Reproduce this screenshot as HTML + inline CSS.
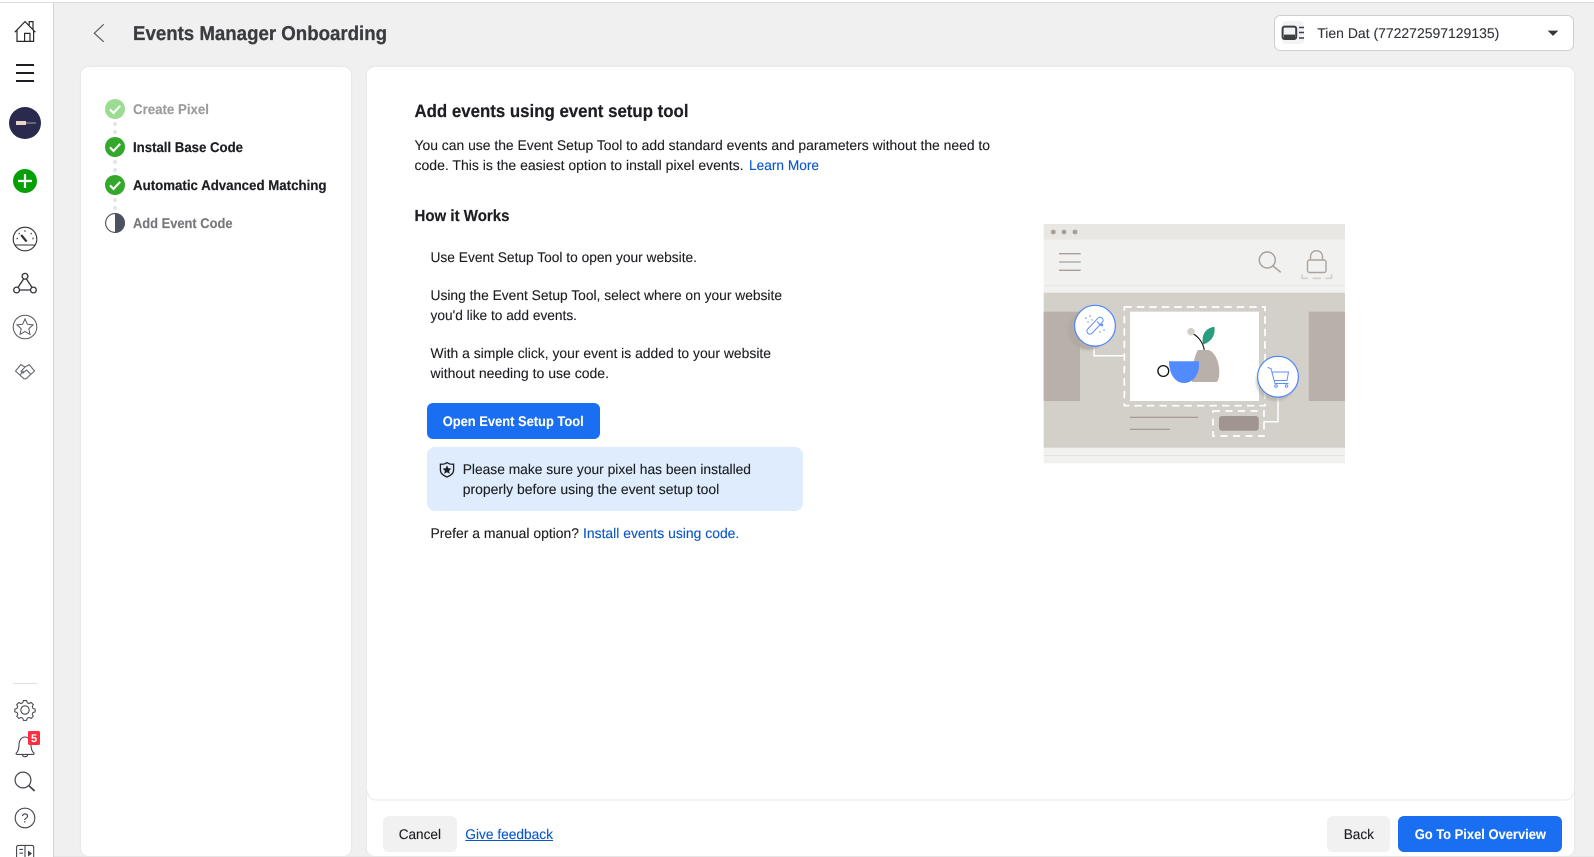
<!DOCTYPE html>
<html lang="en">
<head>
<meta charset="utf-8">
<title>Events Manager Onboarding</title>
<style>
html,body{margin:0;padding:0;width:1594px;height:857px;overflow:hidden;background:#f0f0f0}
svg{display:block;position:absolute;left:0;top:0;filter:blur(.35px)}
text{font-family:"Liberation Sans",Arial,sans-serif;text-rendering:geometricPrecision}
.b{font-weight:700}
.t{font-size:14px;fill:#1c1e21;stroke:#1c1e21;stroke-width:.12}
.l{font-size:14px;fill:#0b57c9;stroke:#0b57c9;stroke-width:.12}
.w{font-size:14px;font-weight:700;fill:#fff;stroke:#fff;stroke-width:.1}
.d{fill:#1c1e21;stroke:#1c1e21;stroke-width:.2}
</style>
</head>
<body>
<svg width="1594" height="857" viewBox="0 0 1594 857" xmlns="http://www.w3.org/2000/svg">
<defs>
<filter id="sh" x="-5%" y="-5%" width="110%" height="110%"><feDropShadow dx="0" dy="0" stdDeviation="1.2" flood-color="#000" flood-opacity=".07"/></filter>
<filter id="soft" x="-20%" y="-20%" width="140%" height="140%"><feGaussianBlur stdDeviation="1"/></filter>
</defs>
<rect width="1594" height="857" fill="#f0f0f0"/>
<rect width="1594" height="2" fill="#fff"/>
<rect y="2" width="1594" height="1" fill="#dcdcdc"/>
<rect y="3" width="53" height="854" fill="#fff"/>
<rect x="53" y="3" width="1" height="854" fill="#cfd2d6"/>

<!-- sidebar icons -->
<g fill="none" stroke="#26282b" stroke-width="1.2">
<path d="M14.8 32.2L25 21.6 35.4 32.2M17 30V41.4H33.6V30M24.6 41.4V33.4H30V41.4M29.2 25.2V21.6H33V29.4"/>
<path d="M16 65H34M16 73H34M16 81H34" stroke-width="1.9" stroke="#1c1e21"/>
</g>
<circle cx="25" cy="123" r="16" fill="#2a2a4e"/>
<rect x="16" y="121" width="10" height="4" fill="#e6d8c3"/>
<rect x="26" y="122.4" width="10" height="1.2" fill="#8f8f9e"/>
<circle cx="25" cy="181" r="12" fill="#05a005"/>
<path d="M25 174V188M18 181H32" stroke="#fff" stroke-width="2.2"/>
<g fill="none" stroke="#2f3236" stroke-width="1.1">
<circle cx="25" cy="239" r="11.8"/>
<path d="M14.5 245H35.5"/>
<path d="M21.2 235L26.6 241.6" stroke-width="2.2"/>
<path d="M16.6 238.5h1.2M18.6 233.6h1.2M24.4 231h1.2M30.6 233.6h1.2M32.4 238.5h1.2" stroke-width="1.4"/>
<circle cx="25" cy="276.3" r="2.9" stroke-width="1.3"/>
<circle cx="16.6" cy="290" r="2.9" stroke-width="1.3"/>
<circle cx="33.4" cy="290" r="2.9" stroke-width="1.3"/>
<path d="M23.6 279L18 287.4M26.4 279L32 287.4M19.5 290H30.5" stroke-width="1.3"/>
<circle cx="25" cy="327" r="11.8" stroke="#55585d" stroke-width="1"/>
<path d="M25 319L27.4 324.2 33 324.9 28.8 328.7 30 334.4 25 331.5 20 334.4 21.2 328.7 17 324.9 22.6 324.2Z" stroke="#55585d" stroke-width="1"/>
<path d="M15.5 371L20.8 364.6 25 367 29.2 364.6 34.5 371 26 378.8 24 378.8ZM25 367L21 371.5 23 373 26.5 370 31 374.5M20 375L23.5 371" stroke="#66696e"/>
</g>
<rect x="13" y="683" width="24" height="1" fill="#dadde1"/>
<g fill="none" stroke="#44474c" stroke-width="1.1">
<circle cx="25" cy="710" r="4.2"/>
<path d="M23 700.4h4l.8 2.7 2.3 1 2.6-1.3 2.7 2.7-1.3 2.6 1 2.2 2.6.8v3.4l-2.7.8-1 2.3 1.3 2.5-2.7 2.7-2.5-1.3-2.3 1-.8 2.7h-4l-.8-2.7-2.3-1-2.5 1.3-2.7-2.7 1.3-2.5-1-2.3-2.7-.8v-3.4l2.6-.8 1-2.2-1.3-2.6 2.7-2.7 2.6 1.3 2.3-1z" transform="translate(25 710) scale(.8) translate(-25 -712.2)" stroke-width="1.3"/>
<path d="M16.2 753.2C18.6 751 19 748 19 745C19 740.4 21.5 737 25 737C28.5 737 31 740.4 31 745C31 748 31.6 751 34 753.2C34.4 753.9 34 754.4 33.2 754.4H17C16.2 754.4 15.8 753.9 16.2 753.2ZM22.4 754.6C22.6 757.4 27.4 757.4 27.6 754.6"/>
<circle cx="23" cy="780" r="7.9" stroke-width="1.2"/>
<path d="M28.8 785.6L34.6 791" stroke-width="1.8"/>
<circle cx="25" cy="818" r="9.8"/>
<path d="M16.6 857V847.4C16.6 846 17.4 845.4 18.6 845.4H31.6C32.9 845.4 33.7 846 33.7 847.4V857M25 845.4V857M19.4 849.4H23M19.4 853.2H23"/>
</g>
<path d="M28 850.5L32 853.5 28 856.5Z" fill="#3d4045"/>
<text x="25" y="822.6" font-size="13" fill="#3d4045" text-anchor="middle">?</text>
<rect x="28" y="731" width="12" height="14" rx="1.5" fill="#fa2f42"/>
<text x="34" y="742" font-size="11" class="b" fill="#fff" text-anchor="middle">5</text>

<!-- header -->
<path d="M103.7 24.3L94.3 33.2 103.7 41.8" fill="none" stroke="#5a5d61" stroke-width="1.2"/>
<text x="133" y="40" class="b" font-size="20" fill="#3a3c3f" stroke="#3a3c3f" stroke-width=".3" textLength="254" lengthAdjust="spacingAndGlyphs">Events Manager Onboarding</text>

<rect x="1274.5" y="15.5" width="299" height="35" rx="6" fill="#fff" stroke="#ccd0d5"/>
<rect x="1281.7" y="21" width="22.5" height="23" rx="4" fill="#f2f3f5"/>
<rect x="1282.6" y="26.6" width="13.6" height="12.4" rx="2" fill="none" stroke="#3c3e42" stroke-width="2"/>
<rect x="1284" y="34.6" width="11" height="3.4" fill="#3c3e42"/>
<path d="M1299 27.5h5M1299 32.5h5M1299 38h5" stroke="#3c3e42" stroke-width="1.6"/>
<text x="1317.3" y="38" class="t" textLength="182" lengthAdjust="spacingAndGlyphs" style="fill:#33363a;stroke:#33363a">Tien Dat (772272597129135)</text>
<path d="M1547.6 30.6H1558.4L1553 35.9Z" fill="#33363a"/>

<!-- left panel -->
<rect x="81" y="67" width="270" height="789" rx="8" fill="#fff" filter="url(#sh)"/>
<g fill="#e3e5e8">
<circle cx="115" cy="124" r="2"/><circle cx="115" cy="132" r="2"/>
<circle cx="115" cy="162" r="2"/><circle cx="115" cy="170" r="2"/>
<circle cx="115" cy="200" r="2"/><circle cx="115" cy="208" r="2"/>
</g>
<circle cx="115" cy="109" r="10" fill="#9bdb92"/>
<circle cx="115" cy="147" r="10" fill="#34a82c"/>
<circle cx="115" cy="185" r="10" fill="#34a82c"/>
<g fill="none" stroke="#fff" stroke-width="2.1">
<path d="M110 109.4L113.5 113 120.2 105.8"/>
<path d="M110 147.4L113.5 151 120.2 143.8"/>
<path d="M110 185.4L113.5 189 120.2 181.8"/>
</g>
<circle cx="115" cy="223" r="9.4" fill="#fff" stroke="#4b4f56" stroke-width="1.1"/>
<path d="M115 213A10 10 0 0 1 115 233Z" fill="#4b5361"/>
<text x="133" y="114" class="b" font-size="14" fill="#9a9b9c" stroke="#9a9b9c" stroke-width=".15" textLength="76" lengthAdjust="spacingAndGlyphs">Create Pixel</text>
<text x="133" y="152" class="b d" font-size="14" textLength="110" lengthAdjust="spacingAndGlyphs">Install Base Code</text>
<text x="133" y="190" class="b d" font-size="14" textLength="193.5" lengthAdjust="spacingAndGlyphs">Automatic Advanced Matching</text>
<text x="133" y="228" class="b" font-size="14" fill="#76787b" stroke="#76787b" stroke-width=".15" textLength="99.5" lengthAdjust="spacingAndGlyphs">Add Event Code</text>

<!-- right panel -->
<rect x="367" y="67" width="1207" height="789" rx="8" fill="#fff" filter="url(#sh)"/>
<path d="M367.5 791Q367.5 800 377 800H1564Q1573.5 800 1573.5 791" fill="none" stroke="#eceded" stroke-width="1.2"/>

<text x="414.5" y="117" class="b d" font-size="18" textLength="274" lengthAdjust="spacingAndGlyphs">Add events using event setup tool</text>
<text x="414.5" y="150" class="t" textLength="575.5" lengthAdjust="spacingAndGlyphs">You can use the Event Setup Tool to add standard events and parameters without the need to</text>
<text x="414.5" y="170" class="t" textLength="329" lengthAdjust="spacingAndGlyphs">code. This is the easiest option to install pixel events.</text>
<text x="749" y="170" class="l" textLength="70" lengthAdjust="spacingAndGlyphs">Learn More</text>
<text x="414.5" y="221" class="b d" font-size="16" textLength="95" lengthAdjust="spacingAndGlyphs">How it Works</text>

<text x="430.5" y="262" class="t" textLength="266.5" lengthAdjust="spacingAndGlyphs">Use Event Setup Tool to open your website.</text>
<text x="430.5" y="300" class="t" textLength="351.5" lengthAdjust="spacingAndGlyphs">Using the Event Setup Tool, select where on your website</text>
<text x="430.5" y="320" class="t" textLength="146.5" lengthAdjust="spacingAndGlyphs">you'd like to add events.</text>
<text x="430.5" y="358" class="t" textLength="340.5" lengthAdjust="spacingAndGlyphs">With a simple click, your event is added to your website</text>
<text x="430.5" y="378" class="t" textLength="178.5" lengthAdjust="spacingAndGlyphs">without needing to use code.</text>

<rect x="427" y="403" width="173" height="36" rx="6" fill="#1a6ef1"/>
<text x="442.7" y="426" class="w" textLength="141" lengthAdjust="spacingAndGlyphs">Open Event Setup Tool</text>

<rect x="427" y="447" width="376" height="64" rx="8" fill="#deecfd"/>
<path d="M447 462.6C449 464 451.6 464.4 453.6 464.2V470C453.6 473.4 450.6 475.6 447 477C443.4 475.6 440.4 473.4 440.4 470V464.2C442.4 464.4 445 464 447 462.6Z" fill="#deecfd" stroke="#1c1e21" stroke-width="1.3"/>
<path d="M447 465.4L448.3 468.3 451.4 468.6 449.1 470.7 449.8 473.8 447 472.2 444.2 473.8 444.9 470.7 442.6 468.6 445.7 468.3Z" fill="#1c1e21"/>
<text x="462.7" y="474" class="t" textLength="288.3" lengthAdjust="spacingAndGlyphs">Please make sure your pixel has been installed</text>
<text x="462.7" y="494" class="t" textLength="256.6" lengthAdjust="spacingAndGlyphs">properly before using the event setup tool</text>

<text x="430.5" y="538" class="t" textLength="148.5" lengthAdjust="spacingAndGlyphs">Prefer a manual option?</text>
<text x="583" y="538" class="l" textLength="156.3" lengthAdjust="spacingAndGlyphs">Install events using code.</text>

<!-- footer -->
<rect x="383" y="816" width="74" height="36" rx="6" fill="#f1f1f1"/>
<text x="398.7" y="839" class="t" textLength="42.3" lengthAdjust="spacingAndGlyphs">Cancel</text>
<text x="465.3" y="839" class="l" textLength="87.7" lengthAdjust="spacingAndGlyphs">Give feedback</text>
<rect x="465.3" y="840" width="87.7" height="1" fill="#0b57c9"/>
<rect x="1327" y="816" width="63" height="36" rx="6" fill="#f1f1f1"/>
<text x="1343.7" y="839" class="t" textLength="30.3" lengthAdjust="spacingAndGlyphs">Back</text>
<rect x="1398" y="816" width="164" height="36" rx="6" fill="#1a6ef1"/>
<text x="1414.7" y="839" class="w" textLength="131.3" lengthAdjust="spacingAndGlyphs">Go To Pixel Overview</text>
<rect x="54" y="856" width="1540" height="1" fill="#e6e6e6"/>

<!-- illustration -->
<g>
<rect x="1043.7" y="224" width="301.3" height="239.3" fill="#f1f1ef"/>
<rect x="1043.7" y="224" width="301.3" height="15.5" fill="#e8e7e3"/>
<circle cx="1053.3" cy="232" r="2.4" fill="#a89f99"/><circle cx="1064" cy="232" r="2.4" fill="#a89f99"/><circle cx="1075" cy="232" r="2.4" fill="#a89f99"/>
<rect x="1043.7" y="285" width="301.3" height="1" fill="#e9e8e5"/>
<rect x="1043.7" y="292.7" width="301.3" height="155" fill="#d3cfc9"/>
<rect x="1043.7" y="455" width="301.3" height="1" fill="#e4e3df"/>
<path d="M1059 253.7H1080.7M1059 262H1080.7M1059 270.3H1080.7" stroke="#a89f99" stroke-width="1.3"/>
<circle cx="1267.3" cy="260" r="8" fill="none" stroke="#a89f99" stroke-width="1.4"/>
<path d="M1273 266L1280.7 272.3" stroke="#a89f99" stroke-width="1.5"/>
<rect x="1307.5" y="260" width="18.5" height="12.5" rx="2" fill="none" stroke="#aca39d" stroke-width="1.4"/>
<path d="M1310.5 260V257C1310.5 248.6 1322.5 248.6 1322.5 257V260" fill="none" stroke="#aca39d" stroke-width="1.4"/>
<path d="M1302 274.5V278.3H1308M1312.5 278.3H1321M1325.5 278.3H1331.5V274.5" fill="none" stroke="#d3cfc9" stroke-width="1.7"/>
<rect x="1043.7" y="311.7" width="36.3" height="89.3" fill="#b8b0a9"/>
<rect x="1308.7" y="311.7" width="36.3" height="89.3" fill="#b8b0a9"/>
<rect x="1130" y="311.7" width="129" height="89.3" fill="#fff"/>
<rect x="1124.3" y="307" width="140.7" height="98.7" fill="none" stroke="#fff" stroke-width="1.7" stroke-dasharray="7.5 5"/>
<path d="M1198 350H1208.5C1215 352 1219.3 362 1219.3 372C1219.3 378 1218 382 1216 382H1192L1193.3 365C1194 358 1197 351 1198 350Z" fill="#b8b0a9"/>
<path d="M1204.3 350C1203 343 1199 337 1193.3 334" fill="none" stroke="#111" stroke-width="1.1"/>
<circle cx="1191" cy="331.7" r="3.8" fill="#d3cfc9"/>
<path d="M1203 344.5C1201 334 1206 328 1214.3 326.7C1216 335 1211 342 1203 344.5Z" fill="#2a9d7f"/>
<circle cx="1163.3" cy="371" r="5.4" fill="#fff" stroke="#111" stroke-width="1.3"/>
<path d="M1169 361.3H1199V365C1199 376 1192 383 1184 383C1175 383 1169 374 1169 361.3Z" fill="#528bff"/>
<path d="M1094 345V355.7H1124M1278 395V421.7H1263.5" fill="none" stroke="#fff" stroke-width="1.5"/>
<circle cx="1088" cy="330" r="20" fill="#b0a8a1" opacity=".85" filter="url(#soft)"/>
<circle cx="1095" cy="325.7" r="20.4" fill="#fff" stroke="#4d86f7" stroke-width="1.2"/>
<circle cx="1276" cy="381" r="20" fill="#b0a8a1" opacity=".6" filter="url(#soft)"/>
<circle cx="1278" cy="376.7" r="20.4" fill="#fff" stroke="#4d86f7" stroke-width="1.2"/>
<g fill="none" stroke="#5f8ff5" stroke-width="1">
<rect x="-3" y="-10.5" width="6" height="21" rx="3" transform="translate(1095 325.7) rotate(43)"/>
<path d="M1097 321.5L1101 325.5"/>
<path d="M1267.5 367.5L1271 368.5 1275 383.5H1288.5M1272 372H1288.5L1287 380.5H1274"/>
<circle cx="1276" cy="386" r="1.3"/><circle cx="1286.5" cy="386" r="1.3"/>
</g>
<g fill="#5f8ff5">
<circle cx="1086" cy="318" r=".8"/><circle cx="1090" cy="316" r=".8"/><circle cx="1092" cy="320" r=".7"/><circle cx="1088" cy="322" r=".7"/><circle cx="1102" cy="325" r="1.3"/><circle cx="1104" cy="330" r=".8"/><circle cx="1100" cy="332" r=".7"/>
</g>
<rect x="1213" y="411" width="51" height="25" fill="none" stroke="#fff" stroke-width="1.7" stroke-dasharray="7 5.5"/>
<rect x="1219" y="416" width="39.7" height="14.7" rx="3" fill="#a1958f"/>
<path d="M1130 417.3H1198M1130 429.3H1170" stroke="#a1958f" stroke-width="1.2"/>
</g>
</svg>
</body>
</html>
